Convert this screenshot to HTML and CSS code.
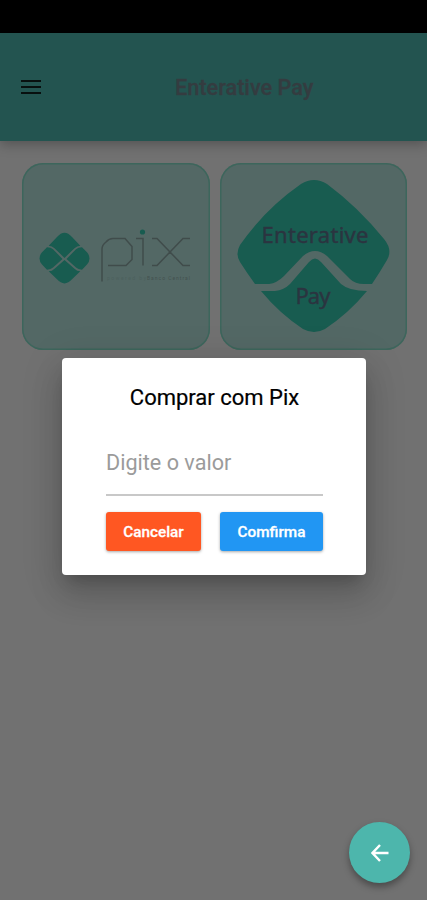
FILE: index.html
```html
<!DOCTYPE html>
<html lang="pt-BR">
<head>
<meta charset="utf-8">
<title>Enterative Pay</title>
<link rel="stylesheet" href="styles.css">
</head>
<body>
<div class="screen">
  <div class="status-bar"></div>
  <header class="app-bar">
    <svg class="menu" viewBox="0 0 20 14"><path d="M0 1h20M0 7h20M0 13h20"/></svg>
    <h1>Enterative Pay</h1>
  </header>
  <main class="cards">
    <div class="card">
      <svg viewBox="0 0 188 188">
        <g class="pix-mark" transform="translate(-1 -3) scale(1 1.020)">
          <path d="M27.700 84L36 75.500Q43.500 67 51 75.500L59.300 84Q56 84 53.500 86.500L43.500 96L33.500 86.500Q31 84 27.700 84Z"/>
          <path d="M27.700 109L36 117Q43.500 125 51 117L59.300 109Q56 109 53.500 106.500L43.500 98L33.500 106.500Q31 109 27.700 109Z"/>
          <path d="M26 85.500Q30 85.500 32 87.500L41.500 97L32 105.500Q30 107.500 26 107.500L21 102.500Q16 96.500 21 90.500Z"/>
          <path d="M61 85.500Q57 85.500 55 87.500L45.500 97L55 105.500Q57 107.500 61 107.500L66 102.500Q71 96.500 66 90.500Z"/>
        </g>
        <path class="pix-word" d="M80 118.500V86Q80 82 84 79Q87 75.500 91 75.500H103L110 83.500V96.500L104 102.500H86M114 75.500H121V102.500M130 75.500H135L161 102.500H168M130 102.500H135L161 75.500H168"/>
        <circle class="pix-dot" cx="120.500" cy="69" r="2.600"/>
        <text class="pix-tag faint" x="85" y="117" textLength="39">powered by</text>
        <text class="pix-tag" x="125" y="117" textLength="43">Banco Central</text>
      </svg>
    </div>
    <div class="card">
      <svg viewBox="0 0 188 188">
        <g class="pay-mark">
          <path d="M81 21Q94 13 107 21Q138 44 164 76Q173 87 167 97Q160 109 152 121H144Q135 121 130 116L107 93Q95 83 83 93L64 113Q57 120 49 121H35Q27 110 20 99Q15 91 20 82Q45 46 81 21Z"/>
          <path d="M41 128H55Q64 127 70 121L89 99Q95 92 101 99L121 121Q129 128 147 128Q129 150 105 166Q94 172 83 166Q59 150 41 128Z"/>
        </g>
        <text class="pay-text" x="41.500" y="80" textLength="107">Enterative</text>
        <text class="pay-text" x="75.500" y="141" textLength="35">Pay</text>
      </svg>
    </div>
  </main>
  <section class="dialog" role="dialog">
    <h2>Comprar com Pix</h2>
    <div class="field">Digite o valor</div>
    <div class="actions">
      <button class="cancel">Cancelar</button>
      <button class="confirm">Comfirma</button>
    </div>
  </section>
  <button class="fab" aria-label="Voltar"><svg viewBox="0 0 18 18"><path d="M17.500 9H1.500M9 1L1.500 9L9 17"/></svg></button>
</div>
</body>
</html>
```
FILE: styles.css
```css
* { box-sizing: border-box; }
body { margin: 0; font-family: Roboto, sans-serif; }
.screen {
  position: relative;
  width: 427px;
  height: 900px;
  overflow: hidden;
  background: #717171;
}
.status-bar { height: 32.500px; background: #000; }
.app-bar {
  display: flex;
  align-items: center;
  height: 108.500px;
  padding-left: 21px;
  background: #235450;
  box-shadow: 0 3px 12px rgba(0, 0, 0, .28);
}
.menu { width: 20px; height: 14px; margin-top: 1px; fill: none; stroke: #08100f; stroke-width: 2; }
h1 { margin: 2px 0 0 134px; font-size: 21.700px; font-weight: 500; color: #343c40; white-space: nowrap; -webkit-text-stroke: .3px #343c40; }
.cards {
  display: grid;
  grid-template-columns: 187.500px 187.500px;
  gap: 10px;
  padding: 22px 0 0 22px;
}
.card {
  height: 187px;
  border-radius: 21px;
  background: #536865;
  box-shadow: inset 0 0 0 1.500px #3d665c;
}
.card svg { display: block; width: 188px; height: 188px; }
.pix-mark, .pay-mark, .pix-dot { fill: #185c50; }
.pix-word { fill: none; stroke: #404c4b; stroke-width: 1.500; }
.pix-tag { font-size: 5px; fill: #435250; }
.faint { fill: #4c605d; }
.pay-text { font: 22px "Noto Sans", sans-serif; fill: #2b3440; stroke: #2b3440; stroke-width: .4; }
.dialog {
  position: absolute;
  left: 62px;
  top: 358px;
  width: 304px;
  height: 217px;
  padding: 26px 43px 24px 44px;
  border-radius: 4px;
  background: #fff;
  box-shadow: 0 10px 15px -6px rgba(0, 0, 0, .2), 0 20px 32px 2px rgba(0, 0, 0, .13), 0 7px 40px 6px rgba(0, 0, 0, .09);
}
h2 { margin: 0; font-size: 22px; line-height: 27px; font-weight: 400; text-align: center; color: #000; white-space: nowrap; -webkit-text-stroke: .2px #000; }
.field {
  height: 85px;
  padding-top: 38px;
  font-size: 21.600px;
  line-height: 28px;
  color: #9b9b9b;
  border-bottom: 2px solid #c8c8c8;
}
.actions { display: flex; justify-content: space-between; margin-top: 16px; }
.actions button {
  height: 39px;
  padding: 0;
  border: 0;
  border-radius: 3px;
  font: 500 15.300px Roboto, sans-serif;
  color: #fff;
  -webkit-text-stroke: .3px #fff;
  box-shadow: 0 1px 3px rgba(0, 0, 0, .35);
}
.actions .cancel { width: 95px; background: #ff5722; }
.actions .confirm { width: 103px; background: #2196f3; }
.fab {
  position: absolute;
  left: 349px;
  top: 822px;
  display: grid;
  place-items: center;
  width: 61px;
  height: 61px;
  padding: 0;
  border: 0;
  border-radius: 50%;
  background: #4db6ac;
  box-shadow: 0 4px 7px rgba(0, 0, 0, .35);
}
.fab svg { width: 18px; height: 18px; fill: none; stroke: #fff; stroke-width: 2.400; }
```
